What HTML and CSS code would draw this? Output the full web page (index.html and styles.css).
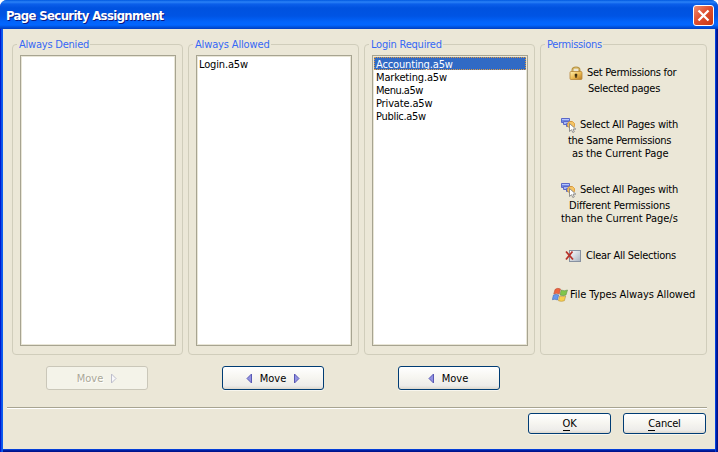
FILE: index.html
```html
<!DOCTYPE html>
<html lang="en">
<head>
<meta charset="utf-8">
<title>Page Security Assignment</title>
<link rel="stylesheet" href="styles.css">
</head>
<body>
<svg class="defs" width="0" height="0" aria-hidden="true">
  <defs>
    <linearGradient id="gold" x2="1" y2="1"><stop stop-color="#fff0b0"/><stop offset=".5" stop-color="#edbd55"/><stop offset="1" stop-color="#b87920"/></linearGradient>
    <linearGradient id="sheet" x2="1" y2="1"><stop stop-color="#ffffff"/><stop offset="1" stop-color="#a9b3c0"/></linearGradient>
    <symbol id="pages" viewBox="0 0 16 16">
      <path d="M.5 1.500h8v4h-8z" fill="#7088e0" stroke="#5a68c8"/><path d="M1 2.500h7" stroke="#b4c4ff"/>
      <path d="M2.500 4.500h8v3h-8z" fill="#a5b5f5" stroke="#5a68c8"/>
      <path d="M5.500 6.500h5v3h-5z" fill="#9cadee" stroke="#5a6ac5"/>
      <path d="M7 5.500l2-1h2.500l2 2v3l-2 1.500h-3l-2-2z" fill="#f5c464" stroke="#d9952e" stroke-width=".8"/>
      <path d="M8.500 6.500v8l2-1.800 1.300 2.800 1.500-.7-1.300-2.700h2.800z" fill="#fff" stroke="#777" stroke-width=".8"/>
    </symbol>
  </defs>
</svg>
<div class="window">
  <header class="titlebar">
    <h1>Page Security Assignment</h1>
    <button class="close" aria-label="Close"><svg width="21" height="21" viewBox="0 0 21 21"><path d="M5.500 5.500l10 10M15.500 5.500l-10 10" stroke="#fff" stroke-width="2.300"/></svg></button>
  </header>
  <main class="client">
    <div class="columns">
      <section class="column">
        <div class="group"><h2 class="denied">Always Denied</h2><ul class="list"></ul></div>
        <button class="button move disabled"><span>Move</span><svg width="6" height="11" viewBox="0 0 6 11"><path d="M.500 1v9l4.500-4.500z" fill="#f8f8fa" stroke="#bdbdcb"/></svg></button>
      </section>
      <section class="column">
        <div class="group"><h2 class="allowed">Always Allowed</h2><ul class="list"><li class="f-login">Login.a5w</li></ul></div>
        <button class="button move"><svg width="6" height="11" viewBox="0 0 6 11"><path d="M5.500 1v9l-4.500-4.500z" fill="#9292e2" stroke="#5858b4"/></svg><span>Move</span><svg width="6" height="11" viewBox="0 0 6 11"><path d="M.500 1v9l4.500-4.500z" fill="#9292e2" stroke="#5858b4"/></svg></button>
      </section>
      <section class="column">
        <div class="group"><h2 class="required">Login Required</h2><ul class="list"><li class="selected f-acc">Accounting.a5w</li><li class="f-mark">Marketing.a5w</li><li class="f-menu">Menu.a5w</li><li class="f-priv">Private.a5w</li><li class="f-pub">Public.a5w</li></ul></div>
        <button class="button move only-left"><svg width="6" height="11" viewBox="0 0 6 11"><path d="M5.500 1v9l-4.500-4.500z" fill="#9292e2" stroke="#5858b4"/></svg><span>Move</span></button>
      </section>
      <section class="column permissions">
        <div class="group"><h2 class="perms">Permissions</h2>
          <div class="action set">
            <p class="lead"><svg width="14" height="14" viewBox="0 0 14 14"><path d="M3.500 6V4q0-2.500 3.500-2.500t3.500 2.500v2" fill="none" stroke="#b7923e" stroke-width="2"/><path d="M4 5V4q0-2 3-2t3 2" fill="none" stroke="#f3de9c" stroke-width=".7"/><rect x="1" y="5.500" width="12" height="8" rx="1" fill="url(#gold)" stroke="#b88737" stroke-width=".8"/><path d="M6 8h2v1.500l-.5 2h-1l-.5-2z" fill="#433010" stroke="#433010" stroke-width=".5"/></svg><span>Set Permissions for</span></p>
            <p class="l2">Selected pages</p>
          </div>
          <div class="action same">
            <p class="lead"><svg width="16" height="16"><use href="#pages"/></svg><span>Select All Pages with</span></p>
            <p class="l2">the Same Permissions</p>
            <p class="l3">as the Current Page</p>
          </div>
          <div class="action different">
            <p class="lead"><svg width="16" height="16"><use href="#pages"/></svg><span>Select All Pages with</span></p>
            <p class="l2">Different Permissions</p>
            <p class="l3">than the Current Page/s</p>
          </div>
          <div class="action clear">
            <p class="lead"><svg width="17" height="14" viewBox="0 0 17 14"><rect x="4.500" y="1.500" width="11" height="11" fill="url(#sheet)" stroke="#8791a0"/><path d="M1 2.500l7 8M7.500 2.500l-6.500 8" stroke="#b6332b" stroke-width="1.800"/></svg><span>Clear All Selections</span></p>
          </div>
          <div class="action types">
            <p class="lead"><svg width="16" height="16" viewBox="0 0 16 16"><path d="M3 2.500Q5.500 .5 8.500 2L7.200 7Q4.500 5.700 1.800 7z" fill="#ed6540" stroke="#b94c37" stroke-width=".6"/><path d="M9.200 3q3 1.500 6.300 0L14 8q-3 1.200-6 0z" fill="#80c64b" stroke="#629348" stroke-width=".6"/><path d="M1.500 8q2.500-1.200 5.200 0l-1.300 5Q3 11.500.3 12.700z" fill="#6799ef" stroke="#4068b5" stroke-width=".6"/><path d="M7.700 9q3 1.200 6 0l-1.300 4.700q-3 1.300-6 0z" fill="#f8cf4c" stroke="#b6913f" stroke-width=".6"/></svg><span>File Types Always Allowed</span></p>
          </div>
        </div>
      </section>
    </div>
    <footer class="footer">
      <button class="button ok"><span><u>O</u>K</span></button>
      <button class="button cancel"><span><u>C</u>ancel</span></button>
    </footer>
  </main>
</div>
</body>
</html>
```
FILE: styles.css
```css
* { box-sizing: border-box; }
body, h1, h2, p, ul { margin: 0; padding: 0; }
body { background: #fff; font: 11px/13px "DejaVu Sans Condensed", "Noto Sans", sans-serif; color: #000; overflow: hidden; }
button { font: inherit; color: inherit; margin: 0; padding: 0; }
svg { display: block; flex: none; }
.defs { position: absolute; }
.window {
  width: 718px; height: 452px; padding: 0 3px 3px; border-radius: 7px 7px 0 0;
  display: flex; flex-direction: column;
  background: linear-gradient(90deg, #0019cf 1px, #0a50e8 1px 2px, #0b5cf0 2px 3px, transparent 3px 715px, #0040df 715px 716px, #001ea0 716px 717px, #00138c 717px), linear-gradient(#0855dd 449px, #0540d8 449px 450px, #001ea0 450px 451px, #00138c 451px);
}
.titlebar {
  height: 29px; margin: 0 -3px; padding: 0 4px 0 6px; display: flex; justify-content: space-between;
  border-radius: 7px 7px 0 0;
  background: linear-gradient(#0058e0 0, #2b82f7 2px, #0b5fea 4px, #0052df 8px, #0054e4 16px, #0264fb 22px, #0266ff 25px, #0052dd 27px, #003dc2 29px);
}
h1 { font: bold 13px/32px "DejaVu Sans Condensed", sans-serif; color: #fff; text-shadow: 1px 1px #0a1883; white-space: nowrap; letter-spacing: -.64px; }
.close { width: 21px; height: 21px; margin-top: 5px; border: 1px solid #fff; border-radius: 3px; overflow: hidden; background: linear-gradient(135deg, #ee8d70, #df5031 45%, #c83710); }
.close svg { margin: -1px; }
.client { flex: 1; background: #ebe7d7; }
.columns { display: grid; grid-template-columns: 171px 171px 171px 167px; gap: 5px; padding: 15px 0 0 9px; }
.group { position: relative; height: 311px; border: 1px solid #d0cdbb; border-radius: 4px; padding: 10px 7px 0; }
h2 { position: absolute; top: -7px; left: 4px; padding: 0 1px 0 2px; font: inherit; color: #3668f5; background: #ebe7d7; white-space: nowrap; line-height: 14px; }
.denied, .required { letter-spacing: -.22px; }
.allowed { letter-spacing: -.15px; }
.perms { letter-spacing: -.34px; }
.list { width: 156px; height: 291px; padding: 1px; border: 1px solid #a7a491; box-shadow: inset 0 0 0 1px #e9e6d7; background: #fff; list-style: none; }
.list li { height: 13px; padding-left: 2px; white-space: nowrap; line-height: 15px; letter-spacing: -.15px; }
.list .f-login { padding-left: 1px; }
.list .f-menu { letter-spacing: -.5px; }
.list .f-pub { letter-spacing: -.3px; }
.list .selected { color: #fff; background: #316ac5; outline: 1px dotted #dc9a45; outline-offset: -1px; }
.button { display: flex; align-items: center; justify-content: center; border: 1px solid #003c74; border-radius: 3px; background: linear-gradient(#fff, #f6f5f0 50%, #edecea 85%, #dcd7cd); box-shadow: 0 1px #f8f6ee; }
.move { width: 102px; height: 24px; margin: 11px 0 0 34px; gap: 8px; padding-top: 1px; }
.only-left { padding-right: 2px; }
.disabled { color: #aaa797; text-shadow: 1px 1px #fff; border-color: #cac7b9; background: #f4f3e9; box-shadow: none; }
.permissions .group { padding: 0; }
.action p { display: flex; align-items: center; height: 13px; white-space: nowrap; }
.lead svg { margin-right: 4px; }
.action .l2 { margin-top: 3px; }
.set { padding: 21px 0 0 28px; letter-spacing: -.28px; }
.set .l2 { padding-left: 19px; }
.same { padding: 23px 0 0 20px; letter-spacing: -.3px; }
.same .l2 { padding-left: 7px; }
.same .l3 { padding-left: 11px; letter-spacing: -.08px; }
.same .lead, .different .lead { letter-spacing: -.2px; }
.same .lead svg, .different .lead svg { margin-right: 3px; }
.different { padding: 23px 0 0 20px; }
.different .l2 { padding-left: 8px; letter-spacing: -.2px; }
.different .l3 { letter-spacing: -.04px; }
.clear { padding: 24px 0 0 24px; letter-spacing: -.26px; }
.types { padding: 26px 0 0 11px; letter-spacing: -.08px; }
.types .lead svg { margin-right: 2px; }
.footer { width: 700px; margin: 17px 0 0 4px; padding-top: 5px; border-top: 1px solid #a7a491; box-shadow: inset 0 1px #fff; display: flex; justify-content: flex-end; gap: 12px; padding-right: 1px; }
.footer .button { width: 83px; height: 21px; letter-spacing: -.2px; }
u { text-decoration: none; border-bottom: 1px solid; display: inline-block; line-height: 12px; }
```
